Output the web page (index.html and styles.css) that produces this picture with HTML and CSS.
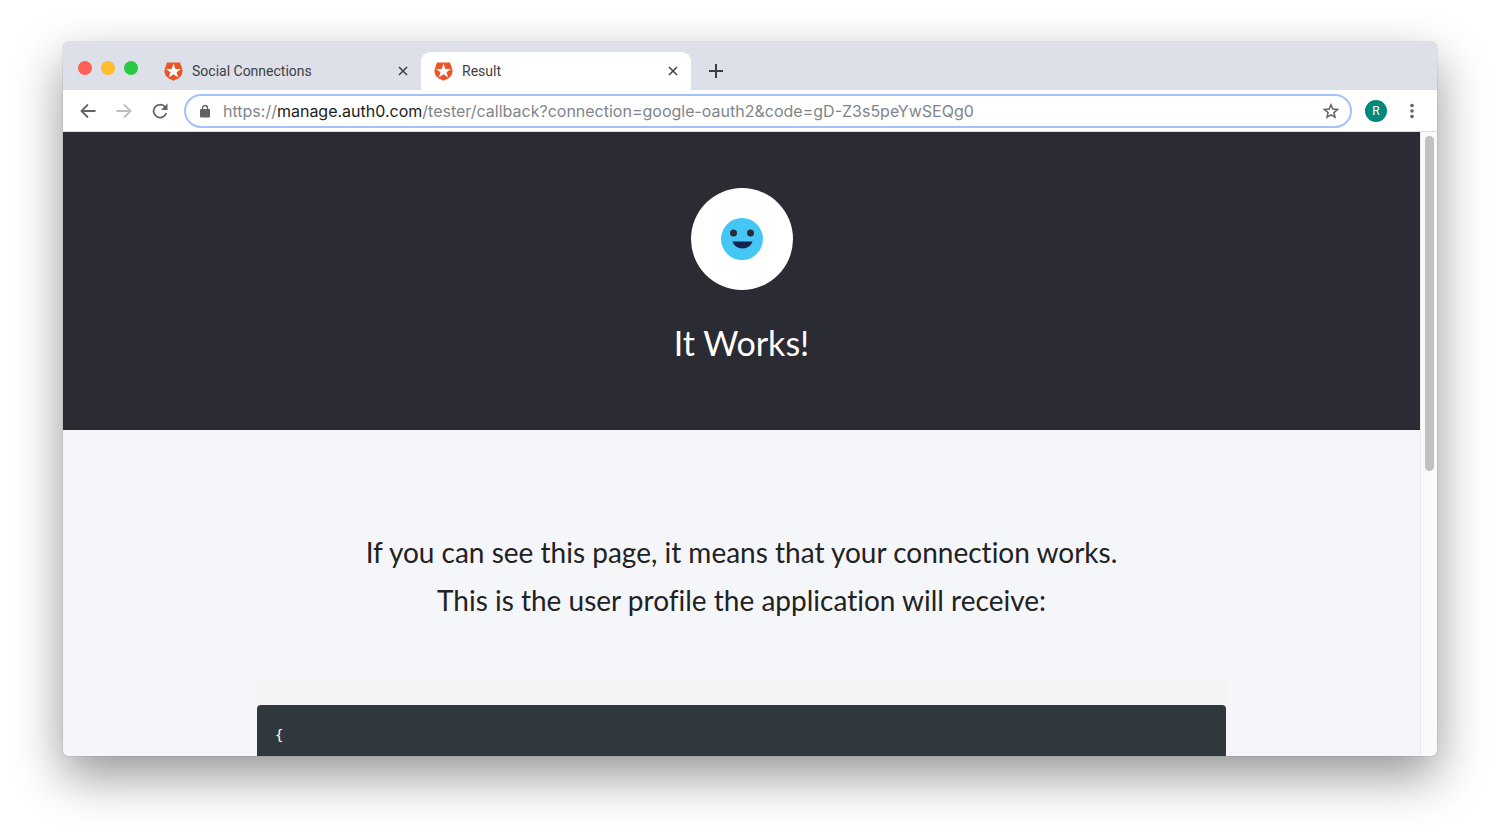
FILE: index.html
```html
<!DOCTYPE html>
<html lang="en">
<head>
    <meta charset="UTF-8">
    <meta name="viewport" content="width=device-width, initial-scale=1.0">
    <title>Result</title>
    <link rel="stylesheet" href="styles.css">
</head>
<body>
    <!-- Shared shield logo -->
    <svg class="defs" width="0" height="0" aria-hidden="true">
        <symbol id="shield" viewBox="0 0 19 19">
            <path d="M3 .5h13l2.200 6.500c1 4-.6 7.300-3.700 9.200l-5 2.600-5-2.600C1.400 14.300-.2 11 .8 7z" fill="#eb5424"/>
            <path d="M9.500 1.500l1.900 5.400h5.600l-4.500 3.300 1.700 5.200-4.700-3.200-4.700 3.200 1.700-5.200L2 6.900h5.600z" fill="#fff"/>
        </symbol>
    </svg>

    <div class="window">
        <!-- Tab strip -->
        <div class="tab-bar">
            <div class="lights">
                <button class="light red" aria-label="Close window"></button>
                <button class="light yellow" aria-label="Minimize window"></button>
                <button class="light green" aria-label="Zoom window"></button>
            </div>
            <div class="tab">
                <button class="tab-name"><svg class="shield" aria-hidden="true"><use href="#shield"/></svg>Social Connections</button>
                <button class="tab-close" aria-label="Close tab"><svg width="10" height="10" viewBox="0 0 10 10"><path d="M1 1l8 8M9 1l-8 8"/></svg></button>
            </div>
            <div class="tab active">
                <button class="tab-name"><svg class="shield" aria-hidden="true"><use href="#shield"/></svg>Result</button>
                <button class="tab-close" aria-label="Close tab"><svg width="10" height="10" viewBox="0 0 10 10"><path d="M1 1l8 8M9 1l-8 8"/></svg></button>
            </div>
            <button class="new-tab" aria-label="New tab"><svg width="14" height="14" viewBox="0 0 14 14"><path d="M7 0v14M0 7h14"/></svg></button>
        </div>

        <!-- Toolbar -->
        <div class="toolbar">
            <button class="nav" aria-label="Back"><svg width="16" height="16" viewBox="0 0 16 16"><path d="M15.500 8H2M8 1.500L1.500 8 8 14.500"/></svg></button>
            <button class="nav off" aria-label="Forward"><svg width="16" height="16" viewBox="0 0 16 16"><path d="M.5 8H14M8 1.500L14.500 8 8 14.500"/></svg></button>
            <button class="nav" aria-label="Reload"><svg width="16" height="16" viewBox="0 0 16 16"><path d="M13.200 4A6.500 6.500 0 1 0 14.300 10"/><path class="fill" d="M15.500 .5v6.500H9z"/></svg></button>
            <div class="address">
                <svg class="lock" width="10" height="14" viewBox="0 0 10 14" aria-hidden="true"><path d="M2.500 6V4a2.500 2.500 0 0 1 5 0V6" fill="none" stroke="#5f6368" stroke-width="1.400"/><rect y="5" width="10" height="8.500" rx="1" fill="#5f6368"/></svg>
                <div class="url" role="textbox" aria-label="Address" contenteditable="true" spellcheck="false">https://<span class="host">manage.auth0.com</span>/tester/callback?connection=google-oauth2&amp;code=gD-Z3s5peYwSEQg0</div>
                <button class="star" aria-label="Bookmark"><svg width="16" height="16" viewBox="0 0 16 16"><path d="M8 1.800l1.800 4.300 4.700.4-3.600 3.100 1.100 4.600L8 11.800l-4 2.400 1.100-4.600-3.600-3.100 4.700-.4z"/></svg></button>
            </div>
            <button class="avatar" aria-label="Profile">R</button>
            <button class="menu" aria-label="Menu"><svg width="4" height="16" viewBox="0 0 4 16"><circle cx="2" cy="2.500" r="1.800"/><circle cx="2" cy="8" r="1.800"/><circle cx="2" cy="13.500" r="1.800"/></svg></button>
        </div>

        <!-- Page -->
        <div class="viewport">
            <main class="page">
                <header class="hero">
                    <div class="badge">
                        <svg width="42" height="42" viewBox="0 0 42 42" aria-hidden="true">
                            <circle cx="21" cy="21" r="21" fill="#44c7f4"/>
                            <circle cx="12.500" cy="15" r="3.500" fill="#2b2b33"/>
                            <circle cx="29.500" cy="15" r="3.500" fill="#2b2b33"/>
                            <path d="M11.500 23.500h20c-1.300 4-5 7-10 7s-8.700-3-10-7z" fill="#16214d"/>
                        </svg>
                    </div>
                    <h1>It Works!</h1>
                </header>
                <section class="result">
                    <p>If you can see this page, it means that your connection works.<br>This is the user profile the application will receive:</p>
                    <div class="profile">
                        <pre><code>{</code></pre>
                    </div>
                </section>
            </main>
            <div class="scrollbar"><div class="thumb"></div></div>
        </div>
    </div>
</body>
</html>
```
FILE: styles.css
```css
* {
    box-sizing: border-box;
}
body {
    margin: 0;
    height: 100vh;
    padding: 42px 63px 84px;
    background-color: #fff;
    font-family: Roboto, sans-serif;
    overflow: hidden;
}
button {
    padding: 0;
    border: none;
    background: none;
    font-family: inherit;
    color: inherit;
    cursor: pointer;
}
svg {
    display: block;
    flex: none;
}
.defs {
    position: absolute;
}
.window {
    display: flex;
    flex-direction: column;
    height: 100%;
    border-radius: 6px;
    overflow: hidden;
    box-shadow: 0 0 1px rgba(0, 0, 0, 0.6), 0 20px 50px rgba(0, 0, 0, 0.42);
}

/* Tabs */
.tab-bar {
    display: flex;
    align-items: flex-end;
    height: 48px;
    padding-left: 15px;
    background-color: #dde0e8;
    color: #3c4043;
}
.lights {
    display: flex;
    gap: 9px;
    align-self: center;
    margin-right: 13px;
    padding-top: 3px;
}
.light {
    width: 14px;
    height: 14px;
    border-radius: 50%;
}
.red {
    background-color: #ff5f57;
}
.yellow {
    background-color: #ffbd2e;
}
.green {
    background-color: #28ca42;
}
.tab {
    display: flex;
    align-items: center;
    width: 270px;
    height: 38px;
    padding: 0 13px;
    border-radius: 9px 9px 0 0;
}
.tab.active {
    background-color: #fff;
}
.tab-name {
    display: flex;
    flex: 1;
    align-items: center;
    gap: 9px;
    font-size: 14px;
}
.shield {
    width: 19px;
    height: 19px;
}
.tab-close svg, .new-tab svg {
    fill: none;
    stroke: #3c4043;
    stroke-width: 1.5;
}
.new-tab {
    align-self: center;
    margin-left: 18px;
    padding-top: 10px;
}
.new-tab svg {
    stroke-width: 2;
}

/* Toolbar */
.toolbar {
    display: flex;
    align-items: center;
    height: 42px;
    padding: 0 23px 0 17px;
    border-bottom: 1px solid #dcdcdc;
    background-color: #fff;
}
.nav {
    margin-right: 20px;
}
.nav svg, .star svg {
    fill: none;
    stroke: #5f6368;
    stroke-width: 1.8;
}
.nav.off svg {
    stroke: #bcbec0;
}
.nav .fill {
    fill: #5f6368;
    stroke: none;
}
.address {
    display: flex;
    flex: 1;
    align-items: center;
    gap: 13px;
    height: 34px;
    margin-left: -4px;
    padding: 0 11px 0 14px;
    border: 2px solid #a3c2fb;
    border-radius: 17px;
}
.url {
    flex: 1;
    font-family: Inter, sans-serif;
    font-size: 16px;
    white-space: nowrap;
    color: #80868b;
    outline: none;
}
.host {
    color: #202124;
}
.star svg {
    stroke-width: 1.5;
}
.avatar {
    width: 22px;
    height: 22px;
    margin: 0 23px 0 13px;
    border-radius: 50%;
    background-color: #00897b;
    color: #fff;
    font-size: 12px;
}
.menu svg {
    fill: #5f6368;
}

/* Page */
.viewport {
    display: flex;
    flex: 1;
    min-height: 0;
}
.page {
    flex: 1;
    overflow: hidden;
    background-color: #f5f6fa;
    font-family: Lato, sans-serif;
    font-variant-ligatures: no-common-ligatures;
    text-align: center;
}
.hero {
    display: flex;
    flex-direction: column;
    align-items: center;
    padding: 56px 0 63px;
    background-color: #2b2b33;
    color: #fff;
}
.badge {
    display: grid;
    place-items: center;
    width: 102px;
    height: 102px;
    border-radius: 50%;
    background-color: #fff;
}
h1 {
    margin: 29px 0 0;
    font-size: 34px;
    font-weight: 400;
    line-height: 48px;
}
.result {
    max-width: 969px;
    margin: 0 auto;
    padding-top: 98px;
    color: #222;
}
.result p {
    margin: 0 0 53px;
    font-size: 28px;
    line-height: 48px;
}
.profile {
    padding-top: 28px;
    background-color: #f4f4f4;
}
pre {
    margin: 0;
    min-height: 200px;
    padding: 20px 18px;
    border-radius: 4px;
    background-color: #30373d;
    color: #fff;
    text-align: left;
}
code {
    font-family: "DejaVu Sans Mono", monospace;
    font-size: 14px;
    line-height: 20px;
}
.scrollbar {
    width: 17px;
    padding: 4px 3px 0 4px;
    border-left: 1px solid #e8e8e8;
    background-color: #fafafa;
}
.thumb {
    width: 9px;
    height: 54%;
    border-radius: 5px;
    background-color: #c1c1c1;
}
```
